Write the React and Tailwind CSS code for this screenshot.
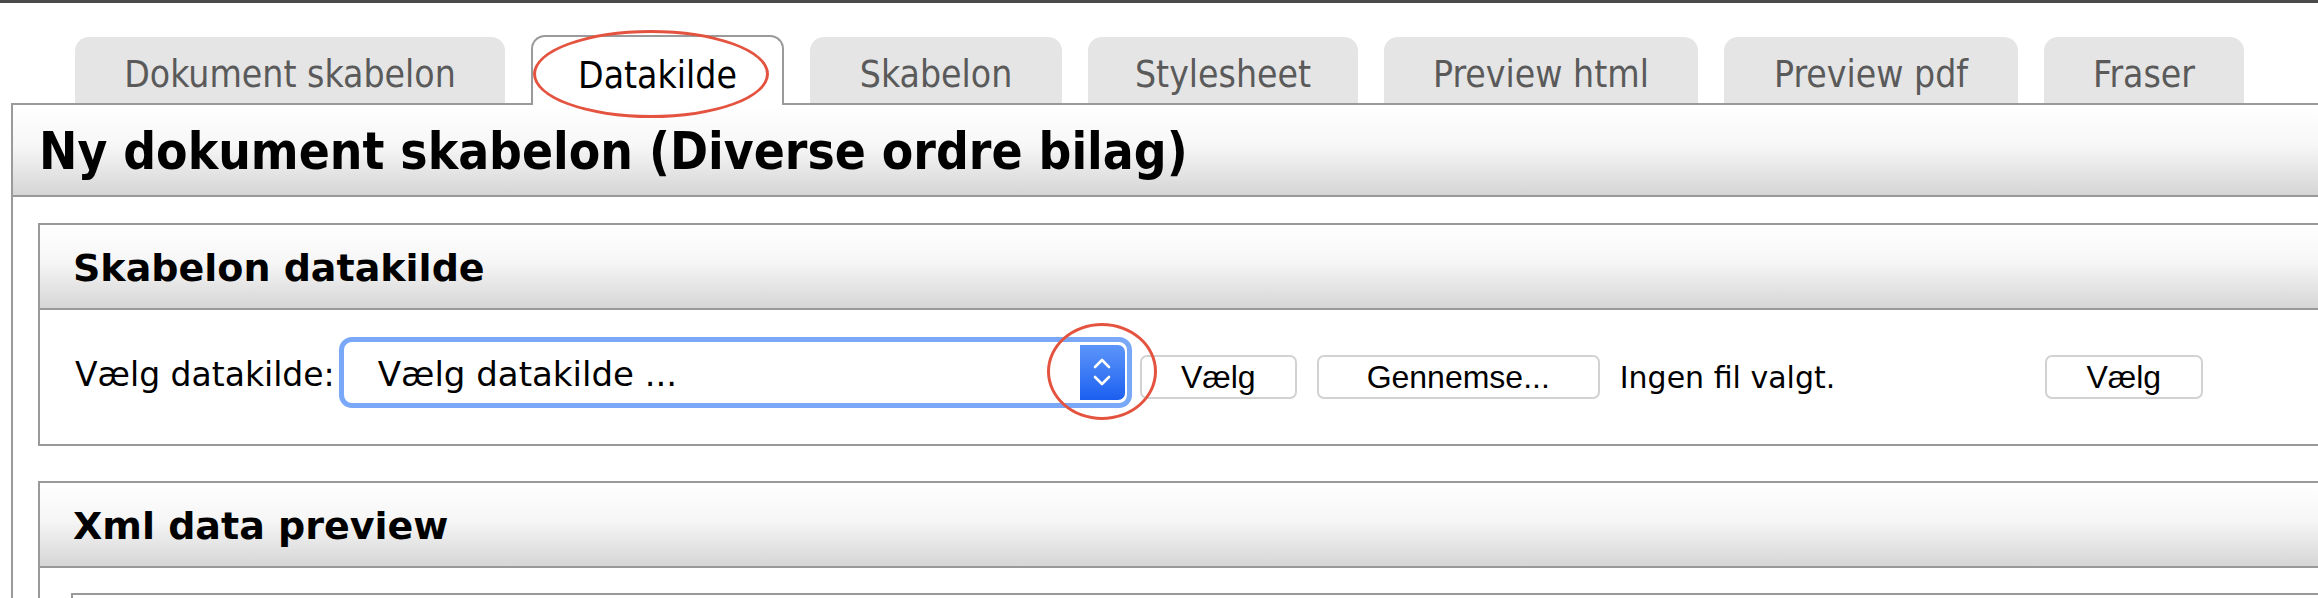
const TABS = [
  { label: 'Dokument skabelon', w: 'w-[430px]' },
  { label: 'Datakilde', w: 'w-[253px]', active: true },
  { label: 'Skabelon', w: 'w-[252px]' },
  { label: 'Stylesheet', w: 'w-[270px]' },
  { label: 'Preview html', w: 'w-[314px]' },
  { label: 'Preview pdf', w: 'w-[294px]' },
  { label: 'Fraser', w: 'w-[200px]' },
]

const CONDENSED = "font-['DejaVu_Sans_Condensed','DejaVu_Sans',sans-serif]"

function Tab({ tab }) {
  if (tab.active) {
    return (
      <div className={`relative z-10 -mb-[2px] flex h-[70px] ${tab.w} items-center justify-center rounded-t-[14px] border-2 border-b-0 border-[#9a9a9a] bg-white pt-[10px] ${CONDENSED} text-[37px] text-black`}>
        {tab.label}
      </div>
    )
  }
  return (
    <div className={`flex h-[66px] ${tab.w} items-center justify-center rounded-t-[14px] bg-[#e5e5e5] pt-[10px] ${CONDENSED} text-[37px] text-[#5a5a5a]`}>
      {tab.label}
    </div>
  )
}

function MacButton({ children, w }) {
  return (
    <div className={`flex h-[44px] ${w} items-center justify-center rounded-[7px] border-2 border-[#d2d2d2] bg-white font-['Liberation_Sans',Arial,sans-serif] text-[32px] text-black`}>
      {children}
    </div>
  )
}

function Section({ title, children }) {
  return (
    <div className="border-2 border-r-0 border-[#999999]">
      <div className="flex h-[85px] items-center border-b-2 border-[#999999] bg-linear-to-b from-white via-[#f6f6f6] via-45% to-[#d6d6d6] pl-[33px] pt-[4px] text-[38px] font-bold text-black">
        {title}
      </div>
      {children}
    </div>
  )
}

function Select() {
  return (
    <div className="flex h-[71px] w-[793px] items-center rounded-[13px] border-[5px] border-[#79a8f8] bg-white">
      <span className="pl-[34px] pt-[4px] text-[34px] text-black">Vælg datakilde ...</span>
      <div className="ml-auto mr-[2px] flex h-[55px] w-[45px] items-center justify-center rounded-r-[7px] bg-linear-to-b from-[#5c95f9] to-[#1c5ef0]">
        <svg width="20" height="36" viewBox="0 0 20 36" fill="none" stroke="white" strokeWidth="2.6" strokeLinecap="round" strokeLinejoin="round">
          <path d="M3 13 L10 6 L17 13" />
          <path d="M3 23 L10 30 L17 23" />
        </svg>
      </div>
    </div>
  )
}

export default function App() {
  return (
    <div className="relative h-[598px] w-[2318px] overflow-hidden border-t-[3px] border-[#4a4a4a] bg-white font-['DejaVu_Sans',Verdana,sans-serif]">
      <div className="flex items-end gap-[26px] pl-[75px] pt-[32px]">
        {TABS.map(t => <Tab key={t.label} tab={t} />)}
      </div>

      <div className="ml-[11px] h-full border-l-2 border-t-2 border-[#9a9a9a]">
        <div className={`flex h-[92px] items-center border-b-2 border-[#999999] bg-linear-to-b from-white via-[#f7f7f7] via-45% to-[#d5d5d5] pl-[26px] pt-[4px] ${CONDENSED} text-[51px] font-bold text-black`}>
          Ny dokument skabelon (Diverse ordre bilag)
        </div>

        <div className="flex flex-col gap-[35px] pl-[25px] pt-[26px]">
          <Section title="Skabelon datakilde">
            <div className="flex h-[134px] items-center pb-[10px] pl-[35px] text-[33px] text-black">
              <span className="pt-[6px]">Vælg datakilde:</span>
              <div className="ml-[4px]">
                <Select />
              </div>
              <div className="ml-[8px] mt-[10px] flex items-center">
                <MacButton w="w-[157px]">Vælg</MacButton>
                <div className="ml-[20px]">
                  <MacButton w="w-[283px]">Gennemse...</MacButton>
                </div>
                <span className="ml-[20px] w-[425px] text-[30px]">Ingen fil valgt.</span>
                <MacButton w="w-[158px]">Vælg</MacButton>
              </div>
            </div>
          </Section>

          <Section title="Xml data preview">
            <div className="pl-[31px] pt-[25px]">
              <div className="h-[60px] border-l-2 border-t-2 border-[#999999]" />
            </div>
          </Section>
        </div>
      </div>

      <div className="pointer-events-none absolute left-[533px] top-[27px] z-20 h-[88px] w-[236px] rounded-[50%] border-[3px] border-[#e4533f]" />
      <div className="pointer-events-none absolute left-[1047px] top-[320px] z-20 h-[97px] w-[110px] rounded-[50%] border-[3px] border-[#e4533f]" />
    </div>
  )
}
